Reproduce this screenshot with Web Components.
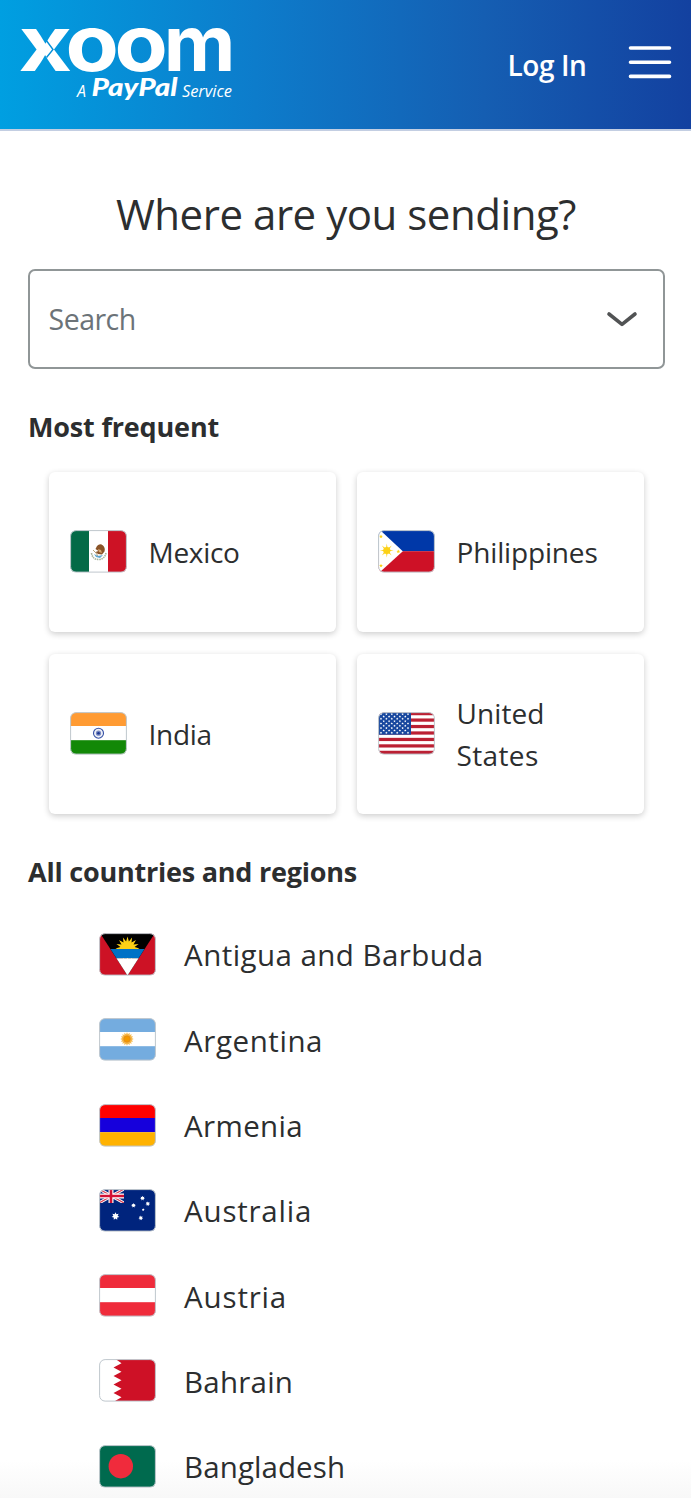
<!DOCTYPE html>
<html lang="en">
<head>
<meta charset="utf-8">
<title>Xoom</title>
<style>
html,body{margin:0;height:1498px;overflow:hidden}
body{font-family:"Open Sans","Noto Sans",sans-serif;color:#2c2e2f;background:linear-gradient(#fff 1460px,#f8f8f8 1498px)}
</style>
</head>
<body>
<xoom-page></xoom-page>
<script>
// Single line of text whose tracking is adjusted to fill the given advance width.
class FitText extends HTMLElement{
  constructor(){super();this.attachShadow({mode:'open'}).innerHTML='<style>:host{display:block;white-space:nowrap}span{display:inline-block}</style><span><slot></slot></span>';}
  connectedCallback(){
    const s=this.shadowRoot.querySelector('span');
    const want=parseFloat(this.getAttribute('w'));
    const n=this.textContent.length;
    s.style.letterSpacing=((want-s.getBoundingClientRect().width)/n).toFixed(3)+'px';
  }
}
const star=(x,y,r,n,inner,fill)=>{
  let p='';
  for(let i=0;i<n*2;i++){const a=Math.PI*i/n-Math.PI/2,q=i%2?r*inner:r;p+=(x+q*Math.cos(a)).toFixed(2)+','+(y+q*Math.sin(a)).toFixed(2)+' ';}
  return `<polygon points="${p}" fill="${fill}"/>`;
};
const rect=(x,y,w,h,f)=>`<rect x="${x}" y="${y}" width="${w}" height="${h}" fill="${f}"/>`;
const stripes=(a,b,c)=>rect(0,0,57,14,a)+rect(0,14,57,14.2,b)+rect(0,28.2,57,14,c);
const flags={
  mx:()=>rect(0,0,19,42,'#046a47')+rect(19,0,19,42,'#fff')+rect(38,0,19,42,'#cd1225')
    +'<path d="M21.5 23q1 6.500 7 6.500t7.500-6.500" fill="none" stroke="#a9b59a" stroke-width="1.600" stroke-dasharray="1.500 .7"/><path d="M24 24l4 2 5-1-3 3-4-1z" fill="#5fa6cf"/><path d="M27 16q3-3 6-.5 2.500 2.500 1.500 6l-2.500 3-4-.5-2.500-2 3-1-3-2z" fill="#8a5428"/><path d="M28 19l3 1 1 3-3-1z" fill="#d2a46a"/><path d="M23 20l3 3 2 3" stroke="#b7a276" fill="none"/>',
  ph:()=>rect(0,0,57,21.200,'#0038a8')+rect(0,21.200,57,21,'#ce1126')+'<path d="M0 0L2 0 24.800 21.200 2 42H0z" fill="#fff"/>'
    +star(8.800,20.500,7,8,.32,'#fcd116')+'<circle cx="8.800" cy="20.500" r="3.600" fill="#fcd116"/>'
    +star(3,6.500,2,5,.45,'#fcd116')+star(3,35.700,2,5,.45,'#fcd116')+star(20.300,21.500,2,5,.45,'#fcd116'),
  in:()=>stripes('#ff9b33','#fff','#128807')+'<circle cx="28.500" cy="21.200" r="5" fill="#eef0f7" stroke="#3651a5" stroke-width="1.100"/><circle cx="28.500" cy="21.200" r="2.600" fill="#7888c0"/><circle cx="28.500" cy="21.200" r="1.300" fill="#1c3793"/>',
  us:()=>{let s=rect(0,0,57,42,'#fff');for(let i=0;i<7;i++)s+=rect(0,i*6.460,57,3.230,'#bb2033');
    s+=rect(0,0,33,22.700,'#17479e');
    for(let r=0;r<9;r++)for(let c=0;c<(r%2?5:6);c++)s+=star(3+c*5.400+(r%2?2.700:0),2.200+r*2.320,1.250,5,.5,'#fff');return s;},
  ag:()=>rect(0,0,57,42,'#cd1225')+'<path d="M1 0H56L28.500 42.500z" fill="#000"/>'+star(28.500,15.500,12,16,.6,'#fcd116')
    +'<path d="M11.500 16H45.500L39.600 25.200H17.400z" fill="#0072c6"/><path d="M17.400 25.200H39.600L28.500 42.500z" fill="#fff"/>',
  ar:()=>stripes('#74acdf','#fff','#74acdf')+star(28,21,6.700,16,.72,'#f6b84a')+'<circle cx="28" cy="21" r="3.300" fill="#f39800" stroke="#d98524" stroke-width=".6"/>',
  am:()=>stripes('#ff0000','#1600dc','#ffb200'),
  au:()=>rect(0,0,57,42,'#00247d')+'<svg width="25" height="14" viewBox="0 0 25 14"><path d="M0 0L25 14M25 0L0 14" stroke="#fff" stroke-width="3"/><path d="M0 0L25 14M25 0L0 14" stroke="#d84055" stroke-width="1.200"/><path d="M12 0V14M0 7H25" stroke="#fff" stroke-width="5"/><path d="M12 0V14M0 7H25" stroke="#d21034" stroke-width="2.600"/></svg>'
    +star(16.500,27.200,4,7,.55,'#fff')+star(43.500,9.200,2.500,7,.55,'#fff')+star(34.500,16.400,2.400,7,.55,'#fff')+star(48.800,14.800,2.400,7,.55,'#fff')+star(44.200,20.700,1.500,5,.5,'#fff')+star(41.800,29,2.400,7,.55,'#fff'),
  at:()=>stripes('#ef2b3b','#fff','#ef2b3b'),
  bh:()=>rect(0,0,57,42,'#fff')+'<path d="M57 0H16.500L22.500 4.200 14.500 8.500 22.500 12.700 14.500 17 22.500 21.200 14.500 25.500 22.500 29.700 14.500 34 22.500 38.200 16 42H57z" fill="#ce1126"/>',
  bd:()=>rect(0,0,57,42,'#006a4e')+'<circle cx="21.800" cy="21.200" r="12.200" fill="#f02b3c"/>'
};
class CountryFlag extends HTMLElement{
  constructor(){super();this.attachShadow({mode:'open'});}
  connectedCallback(){this.shadowRoot.innerHTML=`<style>:host{display:block;flex:none;width:57px;height:43px}svg{display:block}</style>
  <svg width="57" height="43" viewBox="0 0 57 43"><defs><clipPath id="c"><rect x=".5" y=".5" width="56" height="42" rx="5.500"/></clipPath></defs><g clip-path="url(#c)">${flags[this.getAttribute('code')]()}</g><rect x=".6" y=".6" width="55.800" height="41.500" rx="5.500" fill="none" stroke="#bfc7cd" stroke-width="1"/></svg>`;}
}
class XoomLogo extends HTMLElement{
  constructor(){super();this.attachShadow({mode:'open'}).innerHTML=`<style>:host{display:block;width:260px;height:129px}svg{display:block}text{white-space:pre}.word{font:700 77px "Inter",sans-serif}</style>
  <svg width="260" height="129" fill="#fff">
    <g class="word">
      <text transform="translate(18.500 70.500) scale(1.200 1)">x</text>
      <text transform="translate(65.500 70.500) scale(1.130 1)">o</text>
      <text transform="translate(114.500 70.500) scale(1.130 1)">o</text>
      <text transform="translate(163.800 70.500) scale(1.020 1)">m</text>
    </g>
    <path d="M46 40L53 49.500 46.500 57.500" fill="none" stroke="#068fd7" stroke-width="1.400"/>
    <text x="77" y="97" font-family="Open Sans" font-size="16" font-style="italic">A</text>
    <text x="91.500" y="96" font-family="Lato" font-weight="900" font-size="25" font-style="italic" textLength="86" lengthAdjust="spacingAndGlyphs">PayPal</text>
    <text x="182" y="97" font-family="Open Sans" font-size="16.500" font-style="italic" textLength="50">Service</text>
  </svg>`;}
}
class XoomHeader extends HTMLElement{
  constructor(){super();this.attachShadow({mode:'open'}).innerHTML=`<style>
  :host{display:flex;height:129px;align-items:center;border-bottom:2px solid #c3cee2;background:linear-gradient(90deg,#009fe1,#0d7ccb 37%,#155eb2 70%,#1341a0);color:#fff}
  fit-text{margin-left:247.500px;width:79px;font-weight:650;font-size:28px;line-height:40px}
  svg{margin-left:41.500px;margin-top:-5px}
  </style><xoom-logo></xoom-logo><fit-text w="79">Log In</fit-text>
  <svg width="44" height="36" stroke="#fff" stroke-width="3.600" stroke-linecap="round"><path d="M2.500 4H41.500M2.500 18.200H41.500M2.500 32.400H41.500"/></svg>`;}
}
class SearchBox extends HTMLElement{
  constructor(){super();this.attachShadow({mode:'open'});}
  connectedCallback(){this.shadowRoot.innerHTML=`<style>
  :host{box-sizing:border-box;display:flex;align-items:center;justify-content:space-between;width:637px;height:100px;margin-left:27.600px;border:2px solid #909697;border-radius:7px;padding:0 25px 0 19px;color:#6c7378;font-size:28.500px;background:#fff}
  </style><fit-text w="87">${this.getAttribute('label')}</fit-text>
  <svg width="32" height="20" fill="none" stroke="#515354" stroke-width="3.600" stroke-linecap="round" stroke-linejoin="round"><path d="M3 5L16 15.300 29 5"/></svg>`;}
}
class CountryCard extends HTMLElement{
  constructor(){super();this.attachShadow({mode:'open'});}
  connectedCallback(){
    const lines=this.getAttribute('name').split('|'),w=this.getAttribute('w').split('|');
    this.shadowRoot.innerHTML=`<style>:host{box-sizing:border-box;display:flex;align-items:center;gap:21.500px;height:160px;padding-left:21.500px;background:#fff;border-radius:6px;box-shadow:0 2px 6px rgba(0,0,0,.2);font-size:28px;line-height:42px}</style>
    <country-flag code="${this.getAttribute('code')}"></country-flag><div>${lines.map((l,i)=>`<fit-text w="${w[i]}">${l}</fit-text>`).join('')}</div>`;}
}
class CountryRow extends HTMLElement{
  constructor(){super();this.attachShadow({mode:'open'});}
  connectedCallback(){
    this.shadowRoot.innerHTML=`<style>:host{display:flex;align-items:center;gap:28.300px;height:85.300px;padding-left:98.800px;font-size:29.500px;line-height:42px}fit-text{padding-top:2px}</style>
    <country-flag code="${this.getAttribute('code')}"></country-flag><fit-text w="${this.getAttribute('w')}">${this.getAttribute('name')}</fit-text>`;}
}
class XoomPage extends HTMLElement{
  constructor(){super();this.attachShadow({mode:'open'}).innerHTML=`<style>
  :host{display:block}
  .title{display:flex;justify-content:center;font-size:42px;line-height:56px;margin:55px 0 27px;padding-left:1px}
  .h{font-weight:700;font-size:27px;line-height:40px;margin-left:28px}
  .most{margin-top:38px}.all{margin-top:38px}
  .cards{display:grid;grid-template-columns:287px 287px;gap:22px 21px;margin:24.500px 0 0 48.600px}
  .list{margin-top:20.300px}
  </style>
  <xoom-header></xoom-header>
  <div class="title"><fit-text w="460">Where are you sending?</fit-text></div>
  <search-box label="Search"></search-box>
  <fit-text class="h most" w="191">Most frequent</fit-text>
  <div class="cards">
    <country-card code="mx" name="Mexico" w="91"></country-card>
    <country-card code="ph" name="Philippines" w="141"></country-card>
    <country-card code="in" name="India" w="63"></country-card>
    <country-card code="us" name="United|States" w="88|82"></country-card>
  </div>
  <fit-text class="h all" w="329">All countries and regions</fit-text>
  <div class="list">
    <country-row code="ag" name="Antigua and Barbuda" w="299.500"></country-row>
    <country-row code="ar" name="Argentina" w="139"></country-row>
    <country-row code="am" name="Armenia" w="119"></country-row>
    <country-row code="au" name="Australia" w="128"></country-row>
    <country-row code="at" name="Austria" w="103"></country-row>
    <country-row code="bh" name="Bahrain" w="109"></country-row>
    <country-row code="bd" name="Bangladesh" w="161"></country-row>
  </div>`;}
}
for(const [n,c] of [['fit-text',FitText],['country-flag',CountryFlag],['xoom-logo',XoomLogo],['xoom-header',XoomHeader],['search-box',SearchBox],['country-card',CountryCard],['country-row',CountryRow],['xoom-page',XoomPage]])customElements.define(n,c);
</script>
</body>
</html>
